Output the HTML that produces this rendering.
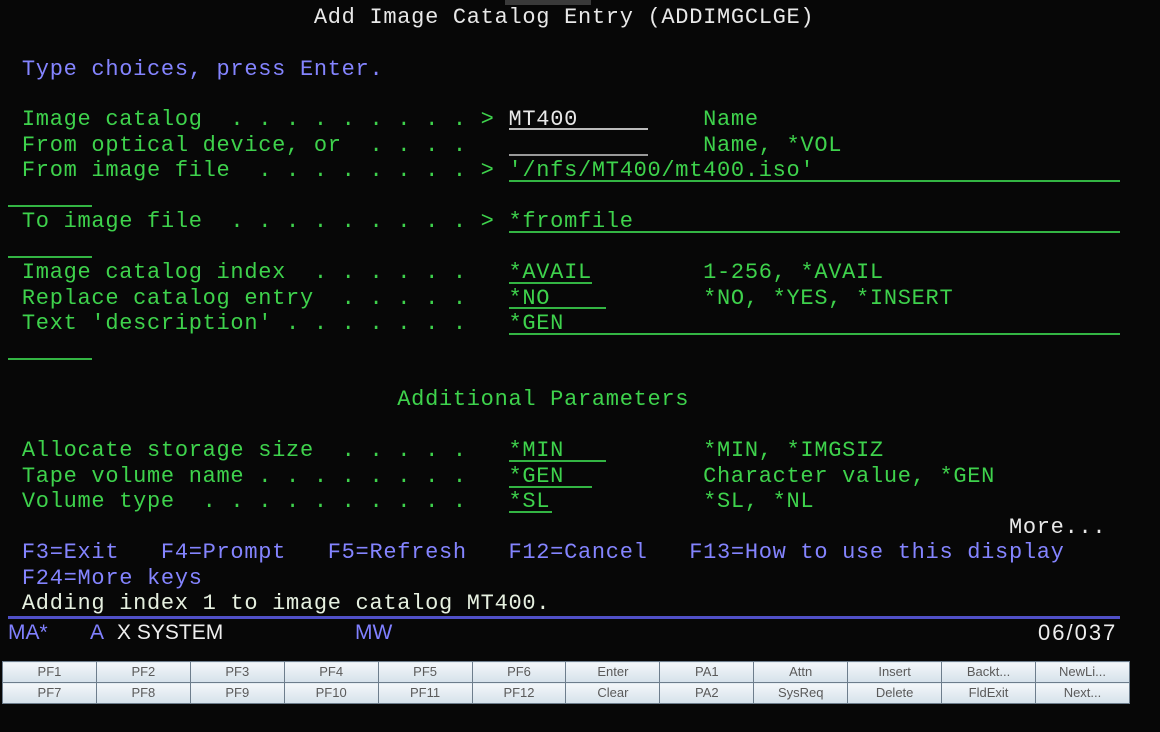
<!DOCTYPE html>
<html><head><meta charset="utf-8"><style>
body{margin:0;width:1160px;height:732px;background:#070707;overflow:hidden;position:relative;font-family:"Liberation Mono",monospace}
.r{position:absolute;left:8px;white-space:pre;font-size:22px;letter-spacing:0.7px;line-height:26px;color:#3ed24c}
.w{color:#e8e8e8}.b{color:#8484ff}
.u{position:absolute;height:2px;background:#33b443}
.st{position:absolute;top:620px;font-family:"Liberation Sans",sans-serif;font-size:21px;line-height:26px}
table{position:absolute;left:2px;top:661px;border-collapse:collapse;width:1128px;table-layout:fixed}
td{border:1px solid #6d7d8c;background:linear-gradient(#f4f7fa,#d5e1ea);height:20px;padding:0;text-align:center;font-family:"Liberation Sans",sans-serif;font-size:13px;color:#5a5a5a;line-height:20px}
</style></head><body>
<div style="position:absolute;left:505px;top:0;width:86px;height:5px;background:#3a3a3a"></div>
<div class="r w" style="top:5px"><span>                      Add Image Catalog Entry (ADDIMGCLGE)</span></div>
<div class="r b" style="top:57px"> Type choices, press Enter.</div>
<div class="r" style="top:107px"> Image catalog  . . . . . . . . . &gt; <span class="w">MT400</span>         Name</div>
<div class="r" style="top:133px"> From optical device, or  . . . .                 Name, *VOL</div>
<div class="r" style="top:158px"> From image file  . . . . . . . . &gt; '/nfs/MT400/mt400.iso'</div>
<div class="r" style="top:209px"> To image file  . . . . . . . . . &gt; *fromfile</div>
<div class="r" style="top:260px"> Image catalog index  . . . . . .   *AVAIL        1-256, *AVAIL</div>
<div class="r" style="top:286px"> Replace catalog entry  . . . . .   *NO           *NO, *YES, *INSERT</div>
<div class="r" style="top:311px"> Text 'description' . . . . . . .   *GEN</div>
<div class="r" style="top:387px">                            Additional Parameters</div>
<div class="r" style="top:438px"> Allocate storage size  . . . . .   *MIN          *MIN, *IMGSIZ</div>
<div class="r" style="top:464px"> Tape volume name . . . . . . . .   *GEN          Character value, *GEN</div>
<div class="r" style="top:489px"> Volume type  . . . . . . . . . .   *SL           *SL, *NL</div>
<div class="r w" style="top:515px">                                                                        More...</div>
<div class="r b" style="top:540px"> F3=Exit   F4=Prompt   F5=Refresh   F12=Cancel   F13=How to use this display</div>
<div class="r b" style="top:566px"> F24=More keys</div>
<div class="r w" style="top:591px;color:#e6f0e0"> Adding index 1 to image catalog MT400.</div>

<div class="u" style="left:509px;width:139px;top:128px;background:#bbb"></div>
<div class="u" style="left:509px;width:139px;top:154px;background:#999"></div>
<div class="u" style="left:509px;width:611px;top:180px"></div>
<div class="u" style="left:8px;width:84px;top:205px"></div>
<div class="u" style="left:509px;width:611px;top:231px"></div>
<div class="u" style="left:8px;width:84px;top:256px"></div>
<div class="u" style="left:509px;width:83px;top:282px"></div>
<div class="u" style="left:509px;width:97px;top:307px"></div>
<div class="u" style="left:509px;width:611px;top:333px"></div>
<div class="u" style="left:8px;width:84px;top:358px"></div>
<div class="u" style="left:509px;width:97px;top:460px"></div>
<div class="u" style="left:509px;width:83px;top:486px"></div>
<div class="u" style="left:509px;width:43px;top:511px"></div>

<div style="position:absolute;left:8px;top:616px;width:1112px;height:3px;background:#5050c8"></div>
<div class="st" style="left:8px;color:#8080ff">MA*</div>
<div class="st" style="left:90px;color:#8080ff">A</div>
<div class="st" style="left:117px;color:#eee">X SYSTEM</div>
<div class="st" style="left:355px;color:#8080ff">MW</div>
<div class="st" style="left:1038px;color:#eee;font-size:22px;letter-spacing:2px">06/037</div>

<table>
<tr><td>PF1</td><td>PF2</td><td>PF3</td><td>PF4</td><td>PF5</td><td>PF6</td><td>Enter</td><td>PA1</td><td>Attn</td><td>Insert</td><td>Backt...</td><td>NewLi...</td></tr>
<tr><td>PF7</td><td>PF8</td><td>PF9</td><td>PF10</td><td>PF11</td><td>PF12</td><td>Clear</td><td>PA2</td><td>SysReq</td><td>Delete</td><td>FldExit</td><td>Next...</td></tr>
</table>
</body></html>
